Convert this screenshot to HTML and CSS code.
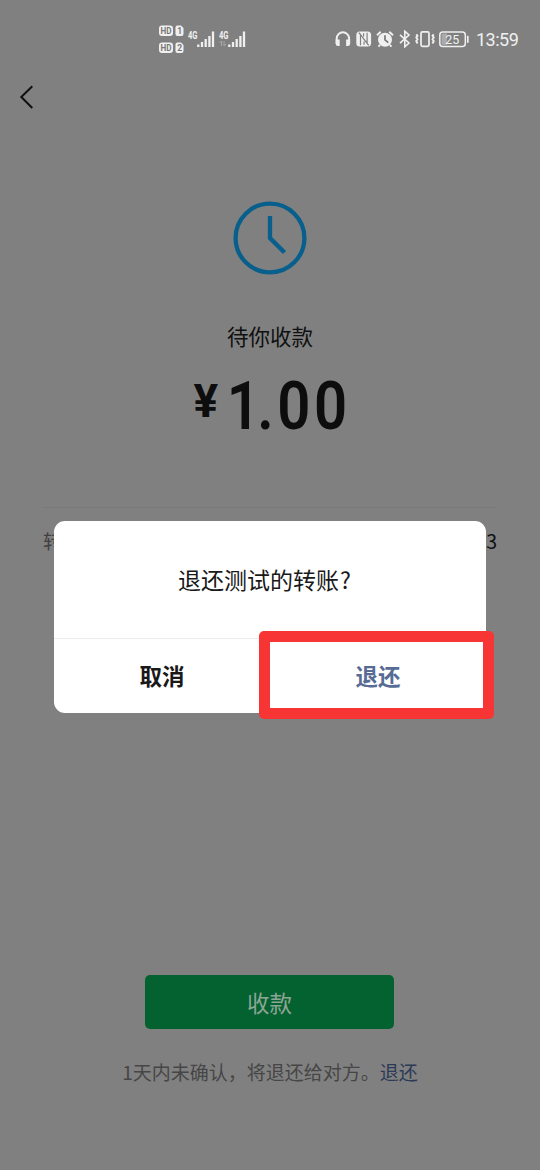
FILE: index.html
```html
<!DOCTYPE html>
<html lang="zh-CN">
<head>
<meta charset="utf-8">
<title>待你收款</title>
<link rel="stylesheet" href="styles.css">
</head>
<body>
<div class="screen">
  <header class="status">
    <div class="sims">
      <svg class="hd" width="26" height="30" viewBox="0 0 26 30">
        <g fill="#f0f0f0">
          <rect x="0" y="1.500" width="14" height="10.500" rx="3"/><path d="M18.500 1.500H22l2.500 2.500V10a2 2 0 0 1-2 2H18.500a2 2 0 0 1-2-2V3.500a2 2 0 0 1 2-2z"/>
          <rect x="0" y="18.500" width="14" height="10.500" rx="3"/><path d="M18.500 18.500H22l2.500 2.500V27a2 2 0 0 1-2 2H18.500a2 2 0 0 1-2-2V20.500a2 2 0 0 1 2-2z"/>
        </g>
        <g class="hd-text">
          <text x="1.500" y="9.900" textLength="11" lengthAdjust="spacingAndGlyphs">HD</text><text x="18.200" y="9.900">1</text>
          <text x="1.500" y="26.900" textLength="11" lengthAdjust="spacingAndGlyphs">HD</text><text x="18.200" y="26.900">2</text>
        </g>
      </svg>
      <svg class="sig" width="27" height="18" viewBox="0 0 27 18">
        <text class="net" x="0" y="8.500" textLength="9.500" lengthAdjust="spacingAndGlyphs">4G</text>
        <path class="bars" d="M10.300 17v-2.500M14 17v-5M17.700 17v-8M21.400 17v-11M25 17V1.500"/>
      </svg>
      <svg class="sig sig2" width="27" height="18" viewBox="0 0 27 18">
        <text class="net" x="0" y="8.500" textLength="9.500" lengthAdjust="spacingAndGlyphs">4G</text>
        <path d="M2.500 16v-5l-2 2M5 11v5l2-2" fill="none" stroke="#aaa"/>
        <path class="bars" d="M10.300 17v-2.500M14 17v-5M17.700 17v-8M21.400 17v-11M25 17V1.500"/>
      </svg>
    </div>
    <div class="tray">
      <svg width="16" height="18" viewBox="0 0 16 18"><path d="M1.700 14V8.500a6.200 6.200 0 0 1 12.400 0V14" fill="none" stroke="#f0f0f0" stroke-width="2"/><path d="M.7 9.500h4v6.600H3a2.300 2.300 0 0 1-2.300-2.300zM11.100 9.500h4v4.300a2.300 2.300 0 0 1-2.300 2.300h-1.700z" fill="#f0f0f0"/></svg>
      <svg width="16" height="18" viewBox="0 0 16 18"><rect x=".3" y="1.500" width="14.800" height="15" rx="3.500" fill="#f0f0f0"/><path d="M4.500 15.200V4.600l6.600 8.800V2.800M4.500 4.600 2.800 2.700M11.100 13.400l1.700 1.900M7.600 3.200v3.200M8 14.800v-3.200" fill="none" stroke="#808080" stroke-width="1.200"/></svg>
      <svg width="18" height="18" viewBox="0 0 18 18"><circle cx="9" cy="9.700" r="7" fill="#f0f0f0"/><path d="M1 5.200 4.700 1.800M17 5.200 13.300 1.800M4 15l-1.500 1.700M14 15l1.500 1.700" stroke="#f0f0f0" stroke-width="1.900"/><path d="M9 5.300v4.600l3.300 2.700" fill="none" stroke="#777" stroke-width="1.700"/></svg>
      <svg width="12" height="18" viewBox="0 0 12 18"><path d="M1 4.800 10 13l-4.200 3.800V1.200L10 5 1 13.200" fill="none" stroke="#f0f0f0" stroke-width="1.600"/></svg>
      <svg width="20" height="18" viewBox="0 0 20 18"><rect x="6" y="1.800" width="8" height="14.500" rx="1.500" fill="none" stroke="#f0f0f0" stroke-width="1.700"/><path d="m1.300 4.300 1.200 1.500-1.200 1.700 1.200 1.800L1.300 11l1.200 2.500M18.700 4.300l-1.200 1.500 1.200 1.700-1.200 1.800 1.200 1.700-1.200 2.500" fill="none" stroke="#f0f0f0" stroke-width="1.900"/></svg>
      <svg width="30" height="18" viewBox="0 0 30 18"><rect x=".8" y="2" width="25.500" height="14.500" rx="3" fill="none" stroke="#f0f0f0" stroke-width="1.500"/><path d="M2.500 5a1.500 1.500 0 0 1 1.500-1.500h4v11.500H4A1.500 1.500 0 0 1 2.500 13.500z" fill="#aaa"/><path d="M28.800 5.800v7" stroke="#f0f0f0" stroke-width="1.700"/><text class="charge" x="6.200" y="13.800" textLength="14" lengthAdjust="spacingAndGlyphs">25</text></svg>
      <time class="clock-time">13:59</time>
    </div>
  </header>
  <nav class="nav">
    <svg width="16" height="26" viewBox="0 0 16 26"><path d="M13.300 2.300 2.300 13l11 11" fill="none" stroke="#101010" stroke-width="2"/></svg>
  </nav>
  <main class="content">
    <svg class="pending" width="74" height="74" viewBox="0 0 74 74"><circle cx="37" cy="37" r="34.400" fill="none" stroke="#085f8c" stroke-width="4.300"/><path d="M37 15v22l14.500 14.500" fill="none" stroke="#085f8c" stroke-width="4.300"/></svg>
    <h1 class="state">待你收款</h1>
    <div class="amount"><span class="yen">¥</span><span class="value"><span class="unit">1</span>.00</span></div>
    <div class="detail"><span class="label">转账时间</span><span class="date">2021-01-23</span></div>
  </main>
  <footer class="foot">
    <button class="receive">收款</button>
    <p class="note">1天内未确认，将退还给对方。<a class="link">退还</a></p>
  </footer>
  <section class="dialog">
    <p class="question">退还测试的转账<span class="mark">?</span></p>
    <div class="actions"><button class="action">取消</button><button class="action confirm">退还</button></div>
    <div class="highlight"></div>
  </section>
</div>
</body>
</html>
```
FILE: styles.css
```css
* { box-sizing: border-box; }
body { margin: 0; background: #808080; font-family: "Noto Sans CJK SC", sans-serif; }
button { border: 0; padding: 0; font-family: inherit; }
svg { display: block; flex: none; }
.screen { position: relative; width: 540px; height: 1170px; overflow: hidden; background: #808080; display: flex; flex-direction: column; }
.status { height: 70px; padding: 24px 21px 0 159px; display: flex; justify-content: space-between; }
.sims { display: flex; }
.sig { margin: 6px 0 0 3px; }
.sig2 { margin-left: 4px; }
.hd-text { font: 700 8.5px "Roboto", sans-serif; fill: #777; }
.net { font: 700 10px "Roboto", sans-serif; fill: #f0f0f0; }
.bars { fill: none; stroke: #f0f0f0; stroke-width: 2.3; }
.tray { display: flex; gap: 4.4px; height: 30px; align-items: center; }
.charge { font: 400 12.5px "Roboto", sans-serif; fill: #f0f0f0; }
.clock-time { font: 400 18px/30px "Roboto", sans-serif; letter-spacing: -0.5px; color: #f0f0f0; width: 43px; margin-left: 2.2px; padding-top: 2px; white-space: nowrap; }
.nav { height: 56px; padding: 14px 0 0 19px; }
.content { height: 520px; padding: 75px 43px 0; display: flex; flex-direction: column; align-items: center; }
.state { margin: 44px 0 0; font-weight: 400; font-size: 21.5px; line-height: 34px; color: #101010; }
.amount { height: 90px; width: 153px; margin-top: 16px; display: flex; align-items: flex-start; color: #0d0d0d; font-family: "Roboto", sans-serif; white-space: nowrap; }
.yen { flex: none; width: 31px; padding-top: 5px; font-size: 46px; font-weight: 700; line-height: 54px; }
.value { font-size: 66px; font-weight: 600; line-height: 76px; letter-spacing: 4px; transform: scaleX(.88); transform-origin: 0 0; }
.unit { margin-left: 2px; letter-spacing: -3px; }
.detail { width: 454px; margin-top: 48px; border-top: 1px solid #797979; padding-top: 18px; display: flex; justify-content: space-between; font-size: 19.5px; line-height: 30px; }
.label { color: #414141; }
.date { color: #101010; }
.foot { margin-top: 329px; padding-right: 1px; display: flex; flex-direction: column; align-items: center; }
.receive { width: 249px; height: 54px; border-radius: 5px; background: #046230; color: #8da596; font-size: 22.5px; line-height: 54px; }
.note { margin: 28px 0 0 1px; font-size: 19px; line-height: 30px; color: #464646; white-space: nowrap; }
.link { color: #2c3a57; }
.dialog { position: absolute; left: 54px; top: 521px; width: 432px; height: 192px; background: #fff; border-radius: 11px; }
.question { margin: 0; height: 118px; padding: 41px 0 0 124px; border-bottom: 1px solid #ececec; font-size: 23px; line-height: 34px; color: #191919; }
.mark { margin-left: 1px; }
.actions { height: 74px; display: flex; }
.action { flex: 1; background: none; color: #191919; font-size: 22.5px; font-weight: 700; line-height: 73px; height: 73px; }
.confirm { color: #576b95; }
.highlight { position: absolute; left: 205px; top: 110px; width: 235px; height: 88px; border: 11px solid #f73535; border-radius: 5px; pointer-events: none; }
```
